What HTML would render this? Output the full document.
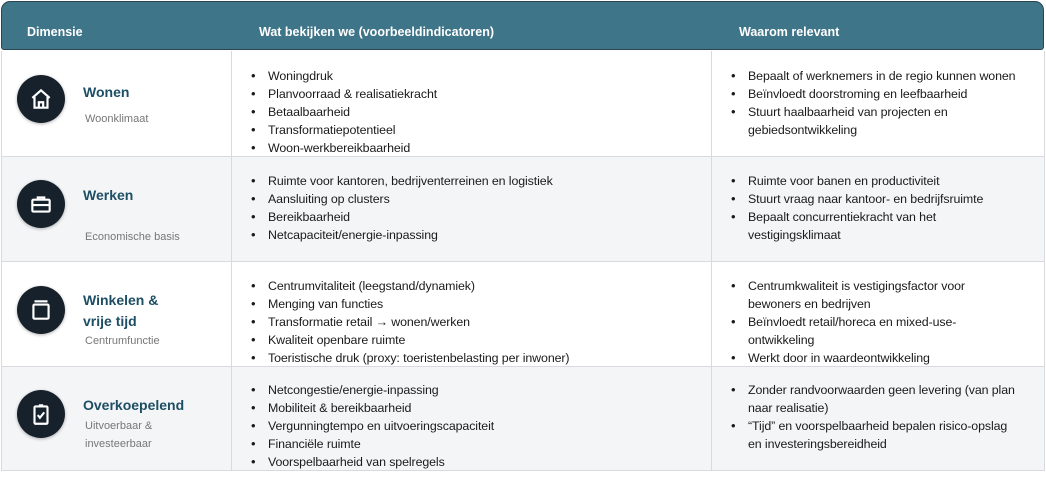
<!DOCTYPE html>
<html><head><meta charset="utf-8"><style>
body{margin:0;width:1046px;height:479px;background:#fff;font-family:"Liberation Sans",sans-serif;position:relative;overflow:hidden}
.hd{position:absolute;left:1px;top:1px;width:1043px;height:49px;background:#3f7589;border-radius:9px 9px 3px 3px;border:1px solid #2b4550;box-sizing:border-box}
.ht{position:absolute;top:25px;color:#fff;font-weight:bold;font-size:12.5px}
.row{position:absolute;left:1px;width:1044px;border-bottom:1px solid #d8dadd;box-sizing:border-box}
.vl{position:absolute;top:51px;width:1px;height:419px;background:#d8dadd}
.l{position:absolute;font-size:12.4px;color:#1a1a1a;line-height:18px;white-space:nowrap;letter-spacing:-0.1px}
.b{position:absolute;font-size:13px;line-height:18px;color:#1a1a1a}
.t{position:absolute;left:83px;font-size:14px;font-weight:bold;color:#1d4e63;line-height:18px}
.s{position:absolute;left:85px;font-size:11px;color:#777;line-height:18px}
.c{position:absolute;left:17px;width:48px;height:48px;border-radius:50%;background:#17212b;box-shadow:0 1px 3px rgba(0,0,0,.3)}
.c svg{position:absolute;left:11px;top:11px}
</style></head><body>
<div class="hd"></div>
<div class="ht" style="left:27px">Dimensie</div>
<div class="ht" style="left:259px">Wat bekijken we (voorbeeldindicatoren)</div>
<div class="ht" style="left:739px">Waarom relevant</div>

<div class="row" style="top:51px;height:106px;background:#fff"></div>
<div class="row" style="top:157px;height:105px;background:#f4f5f7"></div>
<div class="row" style="top:262px;height:105px;background:#fff"></div>
<div class="row" style="top:367px;height:104px;background:#f4f5f7"></div>
<div class="vl" style="left:231px"></div>
<div class="vl" style="left:711px"></div>
<div class="vl" style="left:1044px"></div>
<div class="vl" style="left:1px"></div>

<div class="c" style="top:75px"><svg width="26" height="26" viewBox="0 0 24 24" fill="none" stroke="#fff" stroke-width="2"><path d="M4 11 L12 4 L20 11 M6 10 V20 H18 V10 M10 20 V15 H14 V20"/></svg></div>
<div class="c" style="top:180px"><svg width="26" height="26" viewBox="0 0 24 24" fill="none" stroke="#fff" stroke-width="2"><rect x="4" y="8" width="16" height="11" rx="1"/><path d="M9 8 V6 H15 V8 M4 13 H20"/></svg></div>
<div class="c" style="top:286px"><svg width="26" height="26" viewBox="0 0 24 24" fill="none" stroke="#fff" stroke-width="2"><rect x="5" y="7" width="14" height="13" rx="1"/><path d="M6 4 H18"/></svg></div>
<div class="c" style="top:390px"><svg width="26" height="26" viewBox="0 0 24 24" fill="none" stroke="#fff" stroke-width="2"><rect x="6" y="5" width="12" height="16" rx="1"/><path d="M10 4 H14 M9 13 L11 15.5 L15 10.5"/></svg></div>

<div class="t" style="top:83px">Wonen</div><div class="s" style="top:110px">Woonklimaat</div>
<div class="t" style="top:186px">Werken</div><div class="s" style="top:228px">Economische basis</div>
<div class="t" style="top:291px">Winkelen &amp;</div><div class="t" style="top:312px">vrije tijd</div><div class="s" style="top:332px">Centrumfunctie</div>
<div class="t" style="top:396px">Overkoepelend</div><div class="s" style="top:417px">Uitvoerbaar &amp;</div><div class="s" style="top:435px">investeerbaar</div>

<div class="b" style="left:251px;top:67px">•<br>•<br>•<br>•<br>•</div>
<div class="l" style="left:268px;top:67px">Woningdruk<br>Planvoorraad &amp; realisatiekracht<br>Betaalbaarheid<br>Transformatiepotentieel<br>Woon-werkbereikbaarheid</div>
<div class="b" style="left:251px;top:172px">•<br>•<br>•<br>•</div>
<div class="l" style="left:268px;top:172px">Ruimte voor kantoren, bedrijventerreinen en logistiek<br>Aansluiting op clusters<br>Bereikbaarheid<br>Netcapaciteit/energie-inpassing</div>
<div class="b" style="left:251px;top:277px">•<br>•<br>•<br>•<br>•</div>
<div class="l" style="left:268px;top:277px">Centrumvitaliteit (leegstand/dynamiek)<br>Menging van functies<br>Transformatie retail → wonen/werken<br>Kwaliteit openbare ruimte<br>Toeristische druk (proxy: toeristenbelasting per inwoner)</div>
<div class="b" style="left:251px;top:381px">•<br>•<br>•<br>•<br>•</div>
<div class="l" style="left:268px;top:381px">Netcongestie/energie-inpassing<br>Mobiliteit &amp; bereikbaarheid<br>Vergunningtempo en uitvoeringscapaciteit<br>Financiële ruimte<br>Voorspelbaarheid van spelregels</div>

<div class="b" style="left:731px;top:67px">•<br>•<br>•</div>
<div class="l" style="left:748px;top:67px">Bepaalt of werknemers in de regio kunnen wonen<br>Beïnvloedt doorstroming en leefbaarheid<br>Stuurt haalbaarheid van projecten en<br>gebiedsontwikkeling</div>
<div class="b" style="left:731px;top:172px">•<br>•<br>•</div>
<div class="l" style="left:748px;top:172px">Ruimte voor banen en productiviteit<br>Stuurt vraag naar kantoor- en bedrijfsruimte<br>Bepaalt concurrentiekracht van het<br>vestigingsklimaat</div>
<div class="b" style="left:731px;top:277px">•<br>&nbsp;<br>•<br>&nbsp;<br>•</div>
<div class="l" style="left:748px;top:277px">Centrumkwaliteit is vestigingsfactor voor<br>bewoners en bedrijven<br>Beïnvloedt retail/horeca en mixed-use-<br>ontwikkeling<br>Werkt door in waardeontwikkeling</div>
<div class="b" style="left:731px;top:381px">•<br>&nbsp;<br>•</div>
<div class="l" style="left:748px;top:381px">Zonder randvoorwaarden geen levering (van plan<br>naar realisatie)<br>“Tijd” en voorspelbaarheid bepalen risico-opslag<br>en investeringsbereidheid</div>
</body></html>
